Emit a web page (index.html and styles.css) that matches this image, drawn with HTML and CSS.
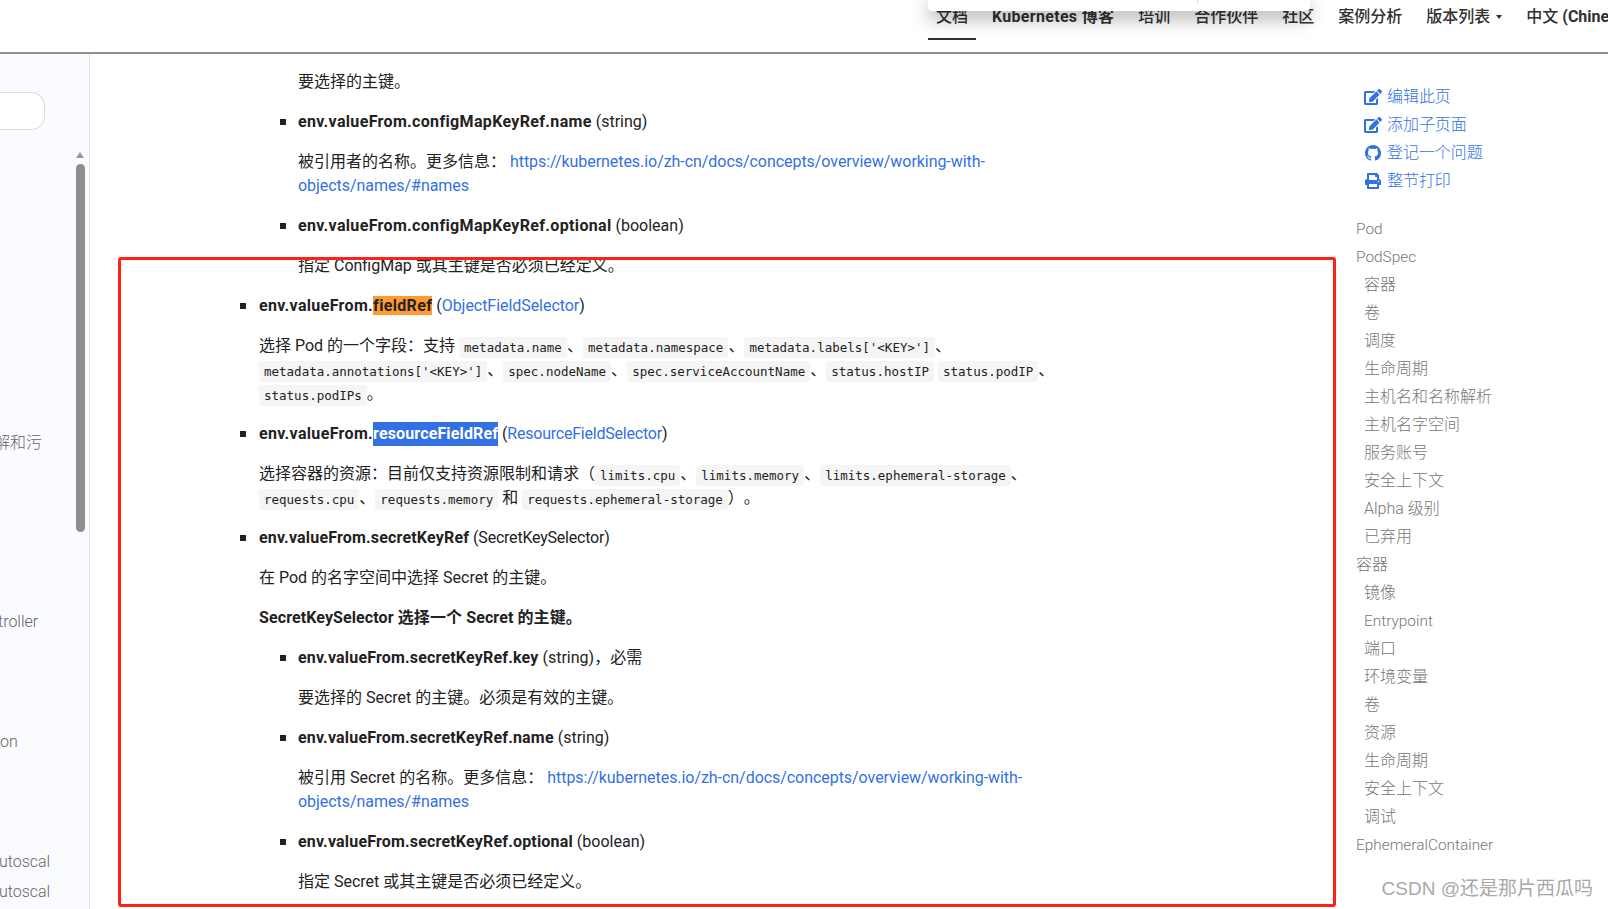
FILE: index.html
```html
<!DOCTYPE html>
<html lang="zh-cn">
<head>
  <meta charset="UTF-8" />
  <title>Pod | Kubernetes</title>
  <link rel="stylesheet" href="styles.css">
</head>
<body>
  <header class="topbar">
    <nav class="nav">
      <a class="nav-item active">文档</a>
      <a class="nav-item strong">Kubernetes 博客</a>
      <a class="nav-item">培训</a>
      <a class="nav-item">合作伙伴</a>
      <a class="nav-item">社区</a>
      <a class="nav-item">案例分析</a>
      <a class="nav-item caret">版本列表</a>
      <a class="nav-item">中文 <b>(Chinese)</b></a>
    </nav>
    <div class="search-popup"><span class="popup-line"></span></div>
  </header>

  <div class="layout">
    <aside class="sidebar">
      <div class="search-box"></div>
      <div class="side-item clip-a">解和污</div>
      <div class="side-item clip-b">troller</div>
      <div class="side-item clip-c">on</div>
      <div class="side-item clip-d">Autoscal</div>
      <div class="side-item clip-e">Autoscal</div>
      <div class="scroll-arrow"></div>
      <div class="scroll-thumb"></div>
    </aside>

    <main class="content">
      <ul>
        <li class="no-head">
          <ul>
            <li class="no-head"><p>要选择的主键。</p></li>
            <li>
              <p><strong>env.valueFrom.configMapKeyRef.name</strong> (string)</p>
              <p>被引用者的名称。更多信息： <a href="#">https://kubernetes.io/zh-cn/docs/concepts/overview/working-with-objects/names/#names</a></p>
            </li>
            <li>
              <p><strong>env.valueFrom.configMapKeyRef.optional</strong> (boolean)</p>
              <p>指定 ConfigMap 或其主键是否必须已经定义。</p>
            </li>
          </ul>
        </li>
        <li>
          <p><strong>env.valueFrom.<mark class="hl-orange">fieldRef</mark></strong> (<a href="#">ObjectFieldSelector</a>)</p>
          <p>选择 Pod 的一个字段：支持 <code>metadata.name</code>、<code>metadata.namespace</code>、<code>metadata.labels['&lt;KEY&gt;']</code>、<code>metadata.annotations['&lt;KEY&gt;']</code>、<code>spec.nodeName</code>、<code>spec.serviceAccountName</code>、<code>status.hostIP</code> <code>status.podIP</code>、<code>status.podIPs</code>。</p>
        </li>
        <li>
          <p><strong>env.valueFrom.<span class="hl-blue">resourceFieldRef</span></strong> <span class="narrow">(<a href="#">ResourceFieldSelector</a>)</span></p>
          <p>选择容器的资源：目前仅支持资源限制和请求（<code>limits.cpu</code>、<code>limits.memory</code>、<code>limits.ephemeral-storage</code>、<code>requests.cpu</code>、<code>requests.memory</code> 和 <code>requests.ephemeral-storage</code>）。</p>
        </li>
        <li>
          <p><strong class="secret">env.valueFrom.secretKeyRef</strong> <span class="narrow">(SecretKeySelector)</span></p>
          <p>在 Pod 的名字空间中选择 Secret 的主键。</p>
          <p><strong class="plain">SecretKeySelector 选择一个 Secret 的主键。</strong></p>
          <ul>
            <li>
              <p><strong class="secret">env.valueFrom.secretKeyRef.key</strong> (string)，必需</p>
              <p>要选择的 Secret 的主键。必须是有效的主键。</p>
            </li>
            <li>
              <p><strong class="secret">env.valueFrom.secretKeyRef.name</strong> (string)</p>
              <p>被引用 Secret 的名称。更多信息： <a href="#">https://kubernetes.io/zh-cn/docs/concepts/overview/working-with-objects/names/#names</a></p>
            </li>
            <li>
              <p><strong class="secret">env.valueFrom.secretKeyRef.optional</strong> (boolean)</p>
              <p>指定 Secret 或其主键是否必须已经定义。</p>
            </li>
          </ul>
        </li>
      </ul>
    </main>

    <aside class="toc">
      <div class="page-links">
        <a class="page-link" href="#">
          <svg class="icon" viewBox="0 0 576 512"><path d="M402.6 83.2l90.2 90.2c3.8 3.8 3.8 10 0 13.8L274.4 405.6l-92.8 10.3c-12.4 1.4-22.9-9.1-21.5-21.5l10.3-92.8L388.8 83.2c3.8-3.8 10-3.8 13.8 0zm162-22.9l-48.8-48.8c-15.2-15.2-39.9-15.2-55.2 0l-35.4 35.4c-3.8 3.8-3.8 10 0 13.8l90.2 90.2c3.8 3.8 10 3.8 13.8 0l35.4-35.4c15.2-15.3 15.2-40 0-55.2zM384 346.2V448H64V128h229.8c3.2 0 6.2-1.3 8.5-3.5l40-40c7.6-7.6 2.2-20.5-8.5-20.5H48C21.5 64 0 85.5 0 112v352c0 26.5 21.5 48 48 48h352c26.5 0 48-21.5 48-48V306.2c0-10.7-12.9-16-20.5-8.5l-40 40c-2.2 2.3-3.5 5.3-3.5 8.5z"/></svg>
          编辑此页
        </a>
        <a class="page-link" href="#">
          <svg class="icon" viewBox="0 0 576 512"><path d="M402.6 83.2l90.2 90.2c3.8 3.8 3.8 10 0 13.8L274.4 405.6l-92.8 10.3c-12.4 1.4-22.9-9.1-21.5-21.5l10.3-92.8L388.8 83.2c3.8-3.8 10-3.8 13.8 0zm162-22.9l-48.8-48.8c-15.2-15.2-39.9-15.2-55.2 0l-35.4 35.4c-3.8 3.8-3.8 10 0 13.8l90.2 90.2c3.8 3.8 10 3.8 13.8 0l35.4-35.4c15.2-15.3 15.2-40 0-55.2zM384 346.2V448H64V128h229.8c3.2 0 6.2-1.3 8.5-3.5l40-40c7.6-7.6 2.2-20.5-8.5-20.5H48C21.5 64 0 85.5 0 112v352c0 26.5 21.5 48 48 48h352c26.5 0 48-21.5 48-48V306.2c0-10.7-12.9-16-20.5-8.5l-40 40c-2.2 2.3-3.5 5.3-3.5 8.5z"/></svg>
          添加子页面
        </a>
        <a class="page-link" href="#">
          <svg class="icon" viewBox="-1 0 18 16"><path d="M8 0C3.58 0 0 3.58 0 8c0 3.54 2.29 6.53 5.47 7.59.4.07.55-.17.55-.38 0-.19-.01-.82-.01-1.49-2.01.37-2.53-.49-2.69-.94-.09-.23-.48-.94-.82-1.13-.28-.15-.68-.52-.01-.53.63-.01 1.08.58 1.23.82.72 1.21 1.87.87 2.33.66.07-.52.28-.87.51-1.07-1.78-.2-3.64-.89-3.64-3.95 0-.87.31-1.59.82-2.15-.08-.2-.36-1.02.08-2.12 0 0 .67-.21 2.2.82.64-.18 1.32-.27 2-.27.68 0 1.36.09 2 .27 1.53-1.04 2.2-.82 2.2-.82.44 1.1.16 1.92.08 2.12.51.56.82 1.27.82 2.15 0 3.07-1.87 3.75-3.65 3.95.29.25.54.73.54 1.48 0 1.07-.01 1.93-.01 2.2 0 .21.15.46.55.38A8.013 8.013 0 0016 8c0-4.42-3.58-8-8-8z"/></svg>
          登记一个问题
        </a>
        <a class="page-link" href="#">
          <svg class="icon" viewBox="-32 0 576 512"><path d="M448 192V77.25c0-8.49-3.37-16.62-9.37-22.63L393.37 9.37c-6-6-14.14-9.37-22.63-9.37H96C78.33 0 64 14.33 64 32v160c-35.35 0-64 28.65-64 64v112c0 8.84 7.16 16 16 16h48v96c0 17.67 14.33 32 32 32h320c17.67 0 32-14.33 32-32v-96h48c8.84 0 16-7.16 16-16V256c0-35.35-28.65-64-64-64zm-64 256H128v-96h256v96zm0-224H128V64h192v48c0 8.84 7.16 16 16 16h48v96zm48 72c-13.25 0-24-10.75-24-24 0-13.26 10.75-24 24-24s24 10.74 24 24c0 13.25-10.75 24-24 24z"/></svg>
          整节打印
        </a>
      </div>
      <ul class="toc-list">
        <li class="latin">Pod</li>
        <li class="latin">PodSpec</li>
        <li class="sub">容器</li>
        <li class="sub">卷</li>
        <li class="sub">调度</li>
        <li class="sub">生命周期</li>
        <li class="sub">主机名和名称解析</li>
        <li class="sub">主机名字空间</li>
        <li class="sub">服务账号</li>
        <li class="sub">安全上下文</li>
        <li class="sub">Alpha 级别</li>
        <li class="sub">已弃用</li>
        <li>容器</li>
        <li class="sub">镜像</li>
        <li class="sub latin">Entrypoint</li>
        <li class="sub">端口</li>
        <li class="sub">环境变量</li>
        <li class="sub">卷</li>
        <li class="sub">资源</li>
        <li class="sub">生命周期</li>
        <li class="sub">安全上下文</li>
        <li class="sub">调试</li>
        <li class="latin">EphemeralContainer</li>
      </ul>
    </aside>
  </div>

  <div class="red-box"></div>
  <div class="watermark">CSDN @还是那片西瓜吗</div>
</body>
</html>
```

FILE: styles.css
```css
html, body {
  margin: 0;
  height: 909px;
  overflow: hidden;
}
body {
  position: relative;
  font-family: Roboto, "Noto Sans CJK SC", sans-serif;
  font-size: 16px;
  line-height: 24px;
  color: #222;
  background: #fff;
  text-spacing-trim: space-all;
}
a {
  color: #3371e3;
  text-decoration: none;
  letter-spacing: -0.05px;
}

/* top bar */
.topbar {
  height: 52px;
  border-bottom: 2px solid #8f8f8f;
  box-sizing: content-box;
  overflow: hidden;
  position: relative;
}
.nav {
  display: flex;
  gap: 8px;
  padding-left: 928px;
  white-space: nowrap;
}
.nav-item {
  height: 38px;
  padding: 5px 8px 0;
  box-sizing: border-box;
  color: #303030;
  font-weight: 500;
  letter-spacing: 0;
}
.nav-item.strong {
  font-weight: 700;
  letter-spacing: 0.3px;
}
.nav-item.active {
  height: 40px;
  border-bottom: 2px solid #303030;
}
.nav-item.caret::after {
  content: "";
  display: inline-block;
  margin-left: 6px;
  vertical-align: 3px;
  border-top: 4px solid #303030;
  border-left: 3.5px solid transparent;
  border-right: 3.5px solid transparent;
}
.search-popup {
  position: absolute;
  top: 0;
  left: 928px;
  width: 382px;
  height: 11px;
  background: #fff;
  border-radius: 0 0 4px 4px;
  box-shadow: 0 6px 18px rgba(0, 0, 0, 0.42);
}
.popup-line {
  display: block;
  width: 1px;
  height: 3px;
  margin-left: 269px;
  background: #ddd;
}

.layout {
  display: flex;
  height: 855px;
}

/* left nav, scrolled off to the left */
.sidebar {
  position: relative;
  flex: 0 0 89px;
  border-right: 1px solid #e4e6f1;
  background: #fafbff;
  overflow: hidden;
  color: #666;
  font-size: 16px;
  font-weight: 300;
  white-space: nowrap;
}
.search-box {
  width: 44px;
  height: 36px;
  margin-top: 38px;
  border: 1px solid #ddd;
  border-left: none;
  border-radius: 0 14px 14px 0;
  background: #fff;
}
.side-item {
  line-height: 22px;
}
.clip-a { margin-top: 302px; text-indent: -6px; }
.clip-b { margin-top: 157px; text-indent: -2px; }
.clip-c { margin-top: 98px; }
.clip-d { margin-top: 98px; text-indent: -11px; }
.clip-e { margin-top: 8px; text-indent: -11px; }
.scroll-arrow {
  position: absolute;
  top: 98px;
  left: 76px;
  border-bottom: 6px solid #999;
  border-left: 4.5px solid transparent;
  border-right: 4.5px solid transparent;
}
.scroll-thumb {
  position: absolute;
  top: 110px;
  left: 76px;
  width: 9px;
  height: 368px;
  border-radius: 5px;
  background: #8e8e8e;
}

/* main text */
.content {
  flex: 0 0 1266px;
  box-sizing: border-box;
  padding: 16px 296px 0 129px;
  overflow: hidden;
}
.content p {
  margin: 0 0 16px;
}
.content ul {
  margin: 0;
  padding-left: 39px;
  list-style: none;
}
.content > ul {
  padding-left: 40px;
}
.content li {
  position: relative;
}
.content li::before {
  content: "";
  position: absolute;
  left: -18px;
  top: 9px;
  width: 6px;
  height: 6px;
  background: #222;
}
.content li.no-head::before {
  display: none;
}
.content > ul > li::before {
  left: -19px;
}
.content strong {
  font-weight: 700;
  letter-spacing: 0.34px;
}
.content strong.plain {
  letter-spacing: 0.1px;
}
.content strong.secret {
  letter-spacing: 0.18px;
}
.narrow,
.narrow a {
  letter-spacing: -0.22px;
}
.hl-orange {
  background: #ff9a33;
  color: #222;
}
.hl-blue {
  display: inline-block;
  background: #3371e3;
  color: #fff;
  letter-spacing: 0.14px;
}
code {
  font-family: "DejaVu Sans Mono", monospace;
  font-size: 12.5px;
  line-height: 1;
  padding: 3px 5px;
  border-radius: 4px;
  background: #f5f5f5;
  color: #222;
  vertical-align: -1px;
}

/* right column */
.toc {
  flex: 1;
  padding-top: 29px;
  min-width: 0;
}
.page-links {
  display: flex;
  flex-direction: column;
  padding-left: 8px;
  font-weight: 300;
}
.page-link {
  display: flex;
  align-items: center;
  gap: 5px;
  height: 28px;
}
.icon {
  width: 18px;
  height: 16px;
  fill: #3371e3;
  flex: none;
}
.toc-list {
  list-style: none;
  margin: 20px 0 0;
  padding: 0;
  color: #777;
  font-weight: 300;
  white-space: nowrap;
}
.toc-list li {
  height: 28px;
  line-height: 28px;
}
.toc-list .sub {
  padding-left: 8px;
}
.toc-list .latin {
  font-size: 15.4px;
}

/* annotations drawn over the screenshot */
.red-box {
  position: absolute;
  left: 118px;
  top: 257px;
  width: 1212px;
  height: 644px;
  border: 3px solid #ff2016;
  border-radius: 3px;
}
.watermark {
  position: absolute;
  right: 15px;
  bottom: 7px;
  color: #a8a8a8;
  font-family: "Liberation Sans", "Noto Sans CJK SC", sans-serif;
  font-size: 19px;
  line-height: 26px;
  white-space: nowrap;
}
```
